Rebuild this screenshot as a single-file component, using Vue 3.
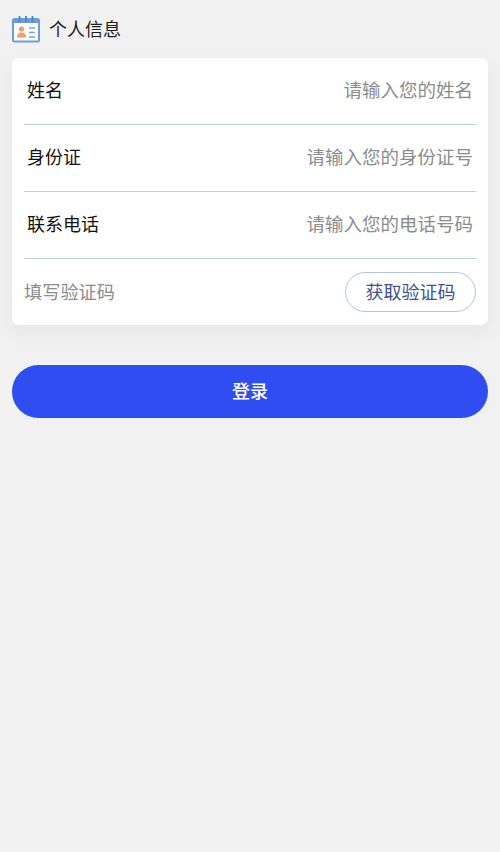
<script setup>
const rows = [
  { label: '姓名', hint: '请输入您的姓名' },
  { label: '身份证', hint: '请输入您的身份证号' },
  { label: '联系电话', hint: '请输入您的电话号码' }
]
</script>

<template>
  <div class="page">
    <header class="head">
      <svg class="icon" width="28" height="28" viewBox="0 0 28 28" fill="none">
        <rect x="1" y="4" width="26" height="22.500" rx="1.500" fill="#fdfdfe" stroke="#6a9ed8" stroke-width="2" />
        <path d="M1 5h26v3H1z" fill="#6a9ed8" />
        <path d="M7.500 1v6.500M14 1v6.500M20.500 1v6.500" stroke="#4f86cc" stroke-width="1.800" />
        <circle cx="9.500" cy="14" r="2.600" fill="#f0a065" />
        <path d="M5 22.500c0-3.800 2-5 4.500-5s4.500 1.200 4.500 5z" fill="#f0a065" />
        <path d="M17 13h6M17 17.500h6M17 22h6" stroke="#7ba3d2" stroke-width="1.600" />
      </svg>
      <span class="title">个人信息</span>
    </header>

    <section class="card">
      <div v-for="row in rows" :key="row.label" class="row">
        <span class="label">{{ row.label }}</span>
        <span class="hint">{{ row.hint }}</span>
      </div>
      <div class="row code">
        <span class="hint">填写验证码</span>
        <button class="send" type="button">获取验证码</button>
      </div>
    </section>

    <button class="login" type="button">登录</button>
  </div>
</template>

<style scoped>
.page {
  width: 500px;
  height: 852px;
  box-sizing: border-box;
  padding: 0 12px;
  background: #f1f1f2;
  font-family: "Liberation Sans", "Noto Sans CJK SC", sans-serif;
  overflow: hidden;
}
.head {
  height: 58px;
  display: flex;
  align-items: center;
  gap: 9px;
  box-sizing: border-box;
  padding: 0 0 1px;
}
.icon {
  flex: none;
}
.title {
  font-size: 18px;
  color: #1d1d1d;
  padding-bottom: 2px;
}
.card {
  background: #fff;
  border-radius: 7px;
  padding: 0 12px;
  box-shadow: 0 8px 22px rgba(0, 0, 0, 0.05);
}
.row {
  display: flex;
  align-items: center;
  justify-content: space-between;
  border-bottom: 1px solid #b9d0d6;
  padding: 0 3px 4px 3px;
  height: 62px;
}
.code {
  height: 66px;
  border-bottom: none;
  padding: 0;
}
.code .hint {
  font-size: 18.200px;
  padding: 0 0 3px;
}
.label {
  font-size: 18px;
  color: #111;
}
.hint {
  font-size: 18.500px;
  color: #8c8c8c;
}
.send {
  width: 131px;
  height: 40px;
  box-sizing: border-box;
  border: 1px solid #b4c6d0;
  border-radius: 20px;
  background: #fff;
  color: #42528f;
  font: inherit;
  font-size: 18px;
  padding: 0 0 2px;
}
.login {
  display: block;
  width: 100%;
  height: 53px;
  margin-top: 40px;
  padding: 0 0 4px;
  border: none;
  border-radius: 27px;
  background: #2f4df0;
  color: #fff;
  font: inherit;
  font-size: 18px;
  font-weight: 500;
}
</style>
